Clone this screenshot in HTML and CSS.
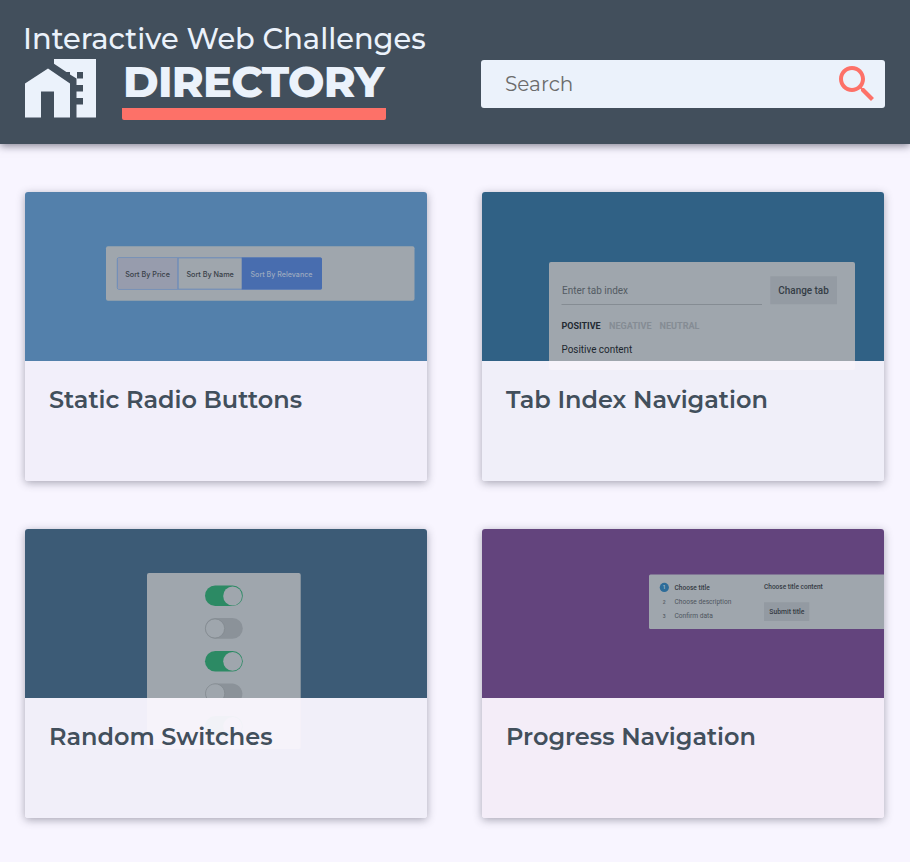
FILE: index.html
```html
<!DOCTYPE html>
<html lang="en">
<head>
<meta charset="utf-8">
<title>Interactive Web Challenges Directory</title>
<link rel="stylesheet" href="styles.css">
</head>
<body>
<header class="header">
  <div class="brand">
    <div class="brand-sub">Interactive Web Challenges</div>
    <div class="brand-row">
      <svg class="brand-icon" viewBox="25 58.5 71 59" width="71" height="59"><path fill-rule="evenodd" d="M25 117V83L48 68l22 15v34H54V91H41v26zM54 58.5h42V117H76.5v-13H83v-6.5h-6.5V91H83v-6.5h-6.5V78L70 74v-2.5h-3.6L54 63.3zM77 71.5V78h6v-6.5z"/></svg>
      <h1 class="brand-title">DIRECTORY</h1>
    </div>
  </div>
  <label class="search">
    <input type="text" placeholder="Search">
    <svg viewBox="0 0 24 24" width="48" height="48"><path d="M15.5 14h-.79l-.28-.27C15.41 12.59 16 11.11 16 9.5 16 5.91 13.09 3 9.5 3S3 5.91 3 9.5 5.91 16 9.5 16c1.61 0 3.09-.59 4.23-1.57l.27.28v.79l5 4.99L20.49 19l-4.99-5zm-6 0C7.01 14 5 11.99 5 9.5S7.01 5 9.5 5 14 7.01 14 9.5 11.99 14 9.5 14z"/></svg>
  </label>
</header>
<main class="grid">
  <article class="card">
    <svg class="art inter" viewBox="0 0 402 289">
      <rect width="402" height="169" fill="#5380ab"/><rect y="169" width="402" height="120" fill="#f2effa"/>
      <rect x="81" y="54.3" width="308.5" height="54.5" rx="2" fill="#9fa6ad"/>
      <rect x="92.3" y="65.8" width="204.2" height="31.4" rx="1.5" fill="#9fa6ad" stroke="#6a8abb"/>
      <path fill="#979cad" d="M93 66.3h60v30.4H93z"/>
      <path stroke="#6a8abb" stroke-width="1.3" d="M153 66v31"/>
      <path fill="#486daf" d="M216.7 65.5H295.5q1.5 0 1.5 1.5v29q0 1.5-1.5 1.5h-78.8z"/>
      <g class="medium" font-size="7.3">
        <text x="100.2" y="84.8" textLength="44.8" lengthAdjust="spacingAndGlyphs" fill="#393f48">Sort By Price</text>
        <text x="161.4" y="84.8" textLength="47.5" lengthAdjust="spacingAndGlyphs" fill="#393f48">Sort By Name</text>
        <text x="225.5" y="84.8" textLength="62" lengthAdjust="spacingAndGlyphs" fill="#9ba9bf">Sort By Relevance</text>
      </g>
    </svg>
    <h2 class="card-title">Static Radio Buttons</h2>
  </article>
  <article class="card">
    <svg class="art" viewBox="0 0 402 289">
      <rect width="402" height="169" fill="#306185"/><rect y="169" width="402" height="120" fill="#f0eff9"/>
      <path fill="#9fa6ad" d="M67 169V72q0-2 2-2h302q2 0 2 2v97z"/>
      <path fill="#f6f3fa" d="M67 169h306v7q0 2-2 2H69q-2 0-2-2z"/>
      <path stroke="#858c93" d="M79.5 112.5H280"/>
      <path fill="#949ba3" d="M288.3 84.3H355v28h-66.7z"/>
      <g>
        <text x="80" y="101.5" font-size="10" textLength="66" lengthAdjust="spacingAndGlyphs" fill="#535b63">Enter tab index</text>
        <text class="medium" x="296.3" y="101.5" font-size="10" textLength="50.5" lengthAdjust="spacingAndGlyphs" fill="#353d46">Change tab</text>
        <text class="bold" x="79.5" y="136.5" font-size="9" textLength="39.2" lengthAdjust="spacingAndGlyphs" fill="#232a33">POSITIVE</text>
        <text class="bold" x="127" y="136.5" font-size="9" textLength="42.5" lengthAdjust="spacingAndGlyphs" fill="#858c94">NEGATIVE</text>
        <text class="bold" x="177.5" y="136.5" font-size="9" textLength="40" lengthAdjust="spacingAndGlyphs" fill="#858c94">NEUTRAL</text>
        <text x="79.5" y="161.3" font-size="10" textLength="70.8" lengthAdjust="spacingAndGlyphs" fill="#20272f">Positive content</text>
      </g>
    </svg>
    <h2 class="card-title">Tab Index Navigation</h2>
  </article>
  <article class="card">
    <svg class="art" viewBox="0 0 402 289">
      <rect width="402" height="169" fill="#3c5b76"/><rect y="169" width="402" height="120" fill="#f1eff9"/>
      <path fill="#9fa6ad" d="M122 169V46q0-2 2-2h149.7q2 0 2 2v123z"/>
      <path fill="#f6f3fa" d="M122 169h153.7v49q0 2-2 2H124q-2 0-2-2z"/>
      <rect x="180" y="56.6" width="37.8" height="20.4" rx="10.2" fill="#2c8a64"/><circle cx="207.6" cy="67" r="9.4" fill="#9fa6ad"/>
      <rect x="180" y="89" width="37.8" height="20.8" rx="10.4" fill="#8b9299"/><circle cx="190" cy="99.5" r="9.6" fill="#9fa6ad" stroke="#7f868d" stroke-width=".7"/>
      <rect x="180" y="122" width="37.8" height="20.6" rx="10.3" fill="#2c8a64"/><circle cx="207.6" cy="132.3" r="9.4" fill="#9fa6ad"/>
      <path fill="#8b9299" d="M181.5 169a10.3 10.3 0 0 1 9-14.4h17a10.3 10.3 0 0 1 9 14.4z"/>
      <path fill="#9fa6ad" stroke="#7f868d" stroke-width=".7" d="M181.7 169a9.6 9.6 0 1 1 16.9 0"/>
      <rect x="180" y="187" width="37.8" height="20.6" rx="10.3" fill="#f1f2f7"/><circle cx="207.6" cy="197.3" r="9.4" fill="#f6f3fa"/>
    </svg>
    <h2 class="card-title">Random Switches</h2>
  </article>
  <article class="card">
    <svg class="art" viewBox="0 0 402 289">
      <rect width="402" height="169" fill="#63447d"/><rect y="169" width="402" height="120" fill="#f4edf8"/>
      <path fill="#9fa6ad" d="M402 45.4v54.5H168.5q-1.5 0-1.5-1.5V46.9q0-1.5 1.5-1.5z"/>
      <circle cx="182.3" cy="58.4" r="4.6" fill="#2d6c99"/>
      <path fill="#939aa2" d="M282 73.3h45.3V92H282z"/>
      <g font-size="6.8">
        <text class="bold" x="182.3" y="60.3" font-size="5" text-anchor="middle" fill="#9fb4c4">1</text>
        <text class="bold" x="182.3" y="74.5" font-size="5" text-anchor="middle" fill="#5f666e">2</text>
        <text class="bold" x="182.3" y="89" font-size="5" text-anchor="middle" fill="#5f666e">3</text>
        <text class="medium" x="192.5" y="60.5" textLength="35.2" lengthAdjust="spacingAndGlyphs" fill="#353b44">Choose title</text>
        <text x="192.5" y="74.7" textLength="56.8" lengthAdjust="spacingAndGlyphs" fill="#4e555d">Choose description</text>
        <text x="192.5" y="89.2" textLength="38.3" lengthAdjust="spacingAndGlyphs" fill="#4e555d">Confirm data</text>
        <text class="medium" x="282" y="59.8" textLength="58.8" lengthAdjust="spacingAndGlyphs" fill="#353b44">Choose title content</text>
        <text class="medium" x="287.3" y="85.2" textLength="35" lengthAdjust="spacingAndGlyphs" fill="#353b44">Submit title</text>
      </g>
    </svg>
    <h2 class="card-title">Progress Navigation</h2>
  </article>
</main>
</body>
</html>
```
FILE: styles.css
```css
* { box-sizing: border-box; }
body {
  margin: 0;
  height: 862px;
  overflow: hidden;
  background: #f8f5ff;
  color: #424f5c;
  font-family: Montserrat, Inter, sans-serif;
}
.header {
  display: flex;
  justify-content: space-between;
  height: 144px;
  padding: 20px 25px 0;
  background: #424f5c;
  color: #ebf2fb;
  box-shadow: 0 2px 8px rgba(55, 55, 75, .6);
}
.brand-sub {
  height: 38px;
  margin-left: -2px;
  font-size: 28.9px;
  font-weight: 500;
  line-height: 38px;
  white-space: nowrap;
}
.brand-row { display: flex; gap: 26px; }
.brand-icon { fill: #ebf2fb; flex: none; margin-top: .5px; }
.brand-title {
  width: 264px;
  height: 62px;
  margin: 0;
  padding-left: 1px;
  border-bottom: 12px solid #fd7168;
  border-radius: 2px;
  font-size: 43.2px;
  font-weight: 800;
  letter-spacing: -.75px;
  line-height: 48px;
  white-space: nowrap;
}
.search {
  display: flex;
  width: 404px;
  height: 48px;
  margin-top: 40px;
  padding-right: 4px;
  border-radius: 3px;
  background: #ebf2fb;
}
.search input {
  flex: 1;
  min-width: 0;
  padding: 0 0 0 24px;
  border: 0;
  outline: 0;
  background: transparent;
  font: 400 20px Montserrat, Inter, sans-serif;
}
.search input::placeholder { color: #6c6c6c; }
.search svg { fill: #fd7168; }
.grid {
  display: grid;
  grid-template-columns: 402px 402px;
  gap: 48px 55px;
  padding: 48px 25px;
}
.card {
  position: relative;
  height: 289px;
  padding: 192px 24px 0;
  overflow: hidden;
  border-radius: 3px;
  box-shadow: 0 2px 8px rgba(55, 55, 75, .42);
}
.art {
  position: absolute;
  inset: 0;
  width: 402px;
  height: 289px;
  font-family: Roboto, sans-serif;
}
.inter { font-family: Inter, sans-serif; }
.medium { font-weight: 500; }
.bold { font-weight: 700; }
.card-title {
  position: relative;
  margin: 0;
  font-size: 24px;
  font-weight: 600;
  line-height: 32px;
  white-space: nowrap;
}
```
